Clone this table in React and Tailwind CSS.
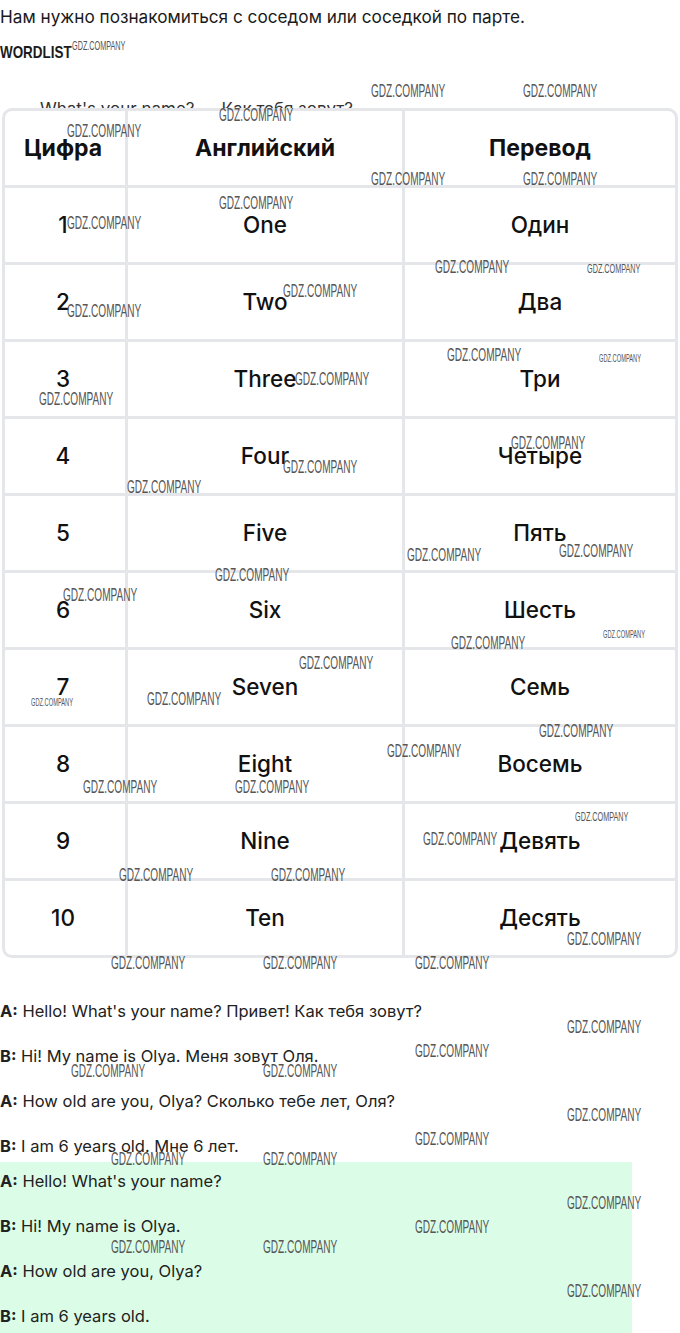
import React from "react";

const WM = [
  ["l", "left-[72px] top-[40px]"],
  ["n", "left-[371px] top-[82px]"],
  ["n", "left-[523px] top-[82px]"],
  ["n", "left-[219px] top-[106px]"],
  ["n", "left-[67px] top-[122px]"],
  ["n", "left-[371px] top-[170px]"],
  ["n", "left-[523px] top-[170px]"],
  ["n", "left-[219px] top-[194px]"],
  ["n", "left-[67px] top-[214px]"],
  ["n", "left-[435px] top-[258px]"],
  ["s", "left-[587px] top-[263px]"],
  ["n", "left-[283px] top-[282px]"],
  ["n", "left-[67px] top-[302px]"],
  ["n", "left-[447px] top-[346px]"],
  ["t", "left-[599px] top-[354px]"],
  ["n", "left-[295px] top-[370px]"],
  ["n", "left-[39px] top-[390px]"],
  ["n", "left-[511px] top-[434px]"],
  ["n", "left-[283px] top-[458px]"],
  ["n", "left-[127px] top-[478px]"],
  ["n", "left-[407px] top-[546px]"],
  ["n", "left-[559px] top-[542px]"],
  ["n", "left-[215px] top-[566px]"],
  ["n", "left-[63px] top-[586px]"],
  ["t", "left-[603px] top-[630px]"],
  ["n", "left-[451px] top-[634px]"],
  ["n", "left-[299px] top-[654px]"],
  ["t", "left-[31px] top-[698px]"],
  ["n", "left-[147px] top-[690px]"],
  ["n", "left-[539px] top-[722px]"],
  ["n", "left-[387px] top-[742px]"],
  ["n", "left-[235px] top-[778px]"],
  ["n", "left-[83px] top-[778px]"],
  ["s", "left-[575px] top-[811px]"],
  ["n", "left-[423px] top-[830px]"],
  ["n", "left-[271px] top-[866px]"],
  ["n", "left-[119px] top-[866px]"],
  ["n", "left-[567px] top-[930px]"],
  ["n", "left-[415px] top-[954px]"],
  ["n", "left-[263px] top-[954px]"],
  ["n", "left-[111px] top-[954px]"],
  ["n", "left-[567px] top-[1018px]"],
  ["n", "left-[415px] top-[1042px]"],
  ["n", "left-[263px] top-[1062px]"],
  ["n", "left-[71px] top-[1062px]"],
  ["n", "left-[567px] top-[1106px]"],
  ["n", "left-[415px] top-[1130px]"],
  ["n", "left-[263px] top-[1150px]"],
  ["n", "left-[111px] top-[1150px]"],
  ["n", "left-[567px] top-[1194px]"],
  ["n", "left-[415px] top-[1218px]"],
  ["n", "left-[263px] top-[1238px]"],
  ["n", "left-[111px] top-[1238px]"],
  ["n", "left-[567px] top-[1282px]"],
];

const SIZE = {
  l: "text-[12.5px] scale-x-[0.58]",
  n: "text-[18px] scale-x-[0.56]",
  s: "text-[12.5px] scale-x-[0.58]",
  t: "text-[10px] scale-x-[0.57]",
};

function Watermarks() {
  return (
    <div className="pointer-events-none absolute inset-0 z-20">
      {WM.map(([s, pos], i) => (
        <span
          key={i}
          className={`absolute ${pos} ${SIZE[s]} origin-left leading-none whitespace-nowrap text-[#555] font-['Liberation_Sans',sans-serif]`}
        >
          GDZ.COMPANY
        </span>
      ))}
    </div>
  );
}

const ROWS = [
  ["1", "One", "Один"],
  ["2", "Two", "Два"],
  ["3", "Three", "Три"],
  ["4", "Four", "Четыре"],
  ["5", "Five", "Пять"],
  ["6", "Six", "Шесть"],
  ["7", "Seven", "Семь"],
  ["8", "Eight", "Восемь"],
  ["9", "Nine", "Девять"],
  ["10", "Ten", "Десять"],
];

function Row({ cells, header }) {
  const text = header
    ? "text-[23px] font-bold text-[#111]"
    : "text-[22.5px] font-medium text-[#111]";
  return (
    <div
      className={`grid grid-cols-[120px_277px_1fr] ${
        header ? "h-[74px]" : "h-[77px] border-t-[3px] border-[#e4e6e9]"
      }`}
    >
      <div className={`flex items-center justify-center pr-[4px] ${text}`}>{cells[0]}</div>
      <div className={`flex items-center justify-center border-l-[3px] border-[#e4e6e9] ${text}`}>
        {cells[1]}
      </div>
      <div className={`flex items-center justify-center border-l-[3px] border-[#e4e6e9] ${text}`}>
        {cells[2]}
      </div>
    </div>
  );
}

function Line({ who, children }) {
  return (
    <p className="leading-6 text-[16.5px] text-[#222]">
      <b className="font-bold">{who}:</b> {children}
    </p>
  );
}

export default function App() {
  return (
    <div className="relative w-[680px] h-[1333px] overflow-hidden bg-white font-['Inter',sans-serif] text-[#1a1a1a]">
      <div className="pt-[5px]">
        <p className="text-[17.2px] leading-6">
          Нам нужно познакомиться с соседом или соседкой по парте.
        </p>
        <h3 className="mt-[12px] text-[17px] leading-6 font-bold uppercase origin-left scale-x-[0.79] font-['Liberation_Sans',sans-serif]">
          Wordlist
        </h3>
        <div className="mt-[32px] flex text-[17px] leading-6 text-[#333]">
          <span className="ml-[40px]">What's your name?</span>
          <span className="ml-[27px]">Как тебя зовут?</span>
        </div>
        <div className="relative z-10 -mt-[13px] mx-[2px] rounded-[10px] border-[3px] border-[#e4e6e9] bg-white overflow-hidden">
          <Row header cells={["Цифра", "Английский", "Перевод"]} />
          {ROWS.map((r) => (
            <Row key={r[0]} cells={r} />
          ))}
        </div>
        <div className="mt-[41px] flex flex-col gap-[21px]">
          <Line who="A">Hello! What's your name? Привет! Как тебя зовут?</Line>
          <Line who="B">Hi! My name is Olya. Меня зовут Оля.</Line>
          <Line who="A">How old are you, Olya? Сколько тебе лет, Оля?</Line>
          <Line who="B">I am 6 years old. Мне 6 лет.</Line>
        </div>
        <div className="mt-[4px] w-[632px] bg-[#dbfde8] pt-[7px] pb-[20px] flex flex-col gap-[21px]">
          <Line who="A">Hello! What's your name?</Line>
          <Line who="B">Hi! My name is Olya.</Line>
          <Line who="A">How old are you, Olya?</Line>
          <Line who="B">I am 6 years old.</Line>
        </div>
      </div>
      <Watermarks />
    </div>
  );
}
